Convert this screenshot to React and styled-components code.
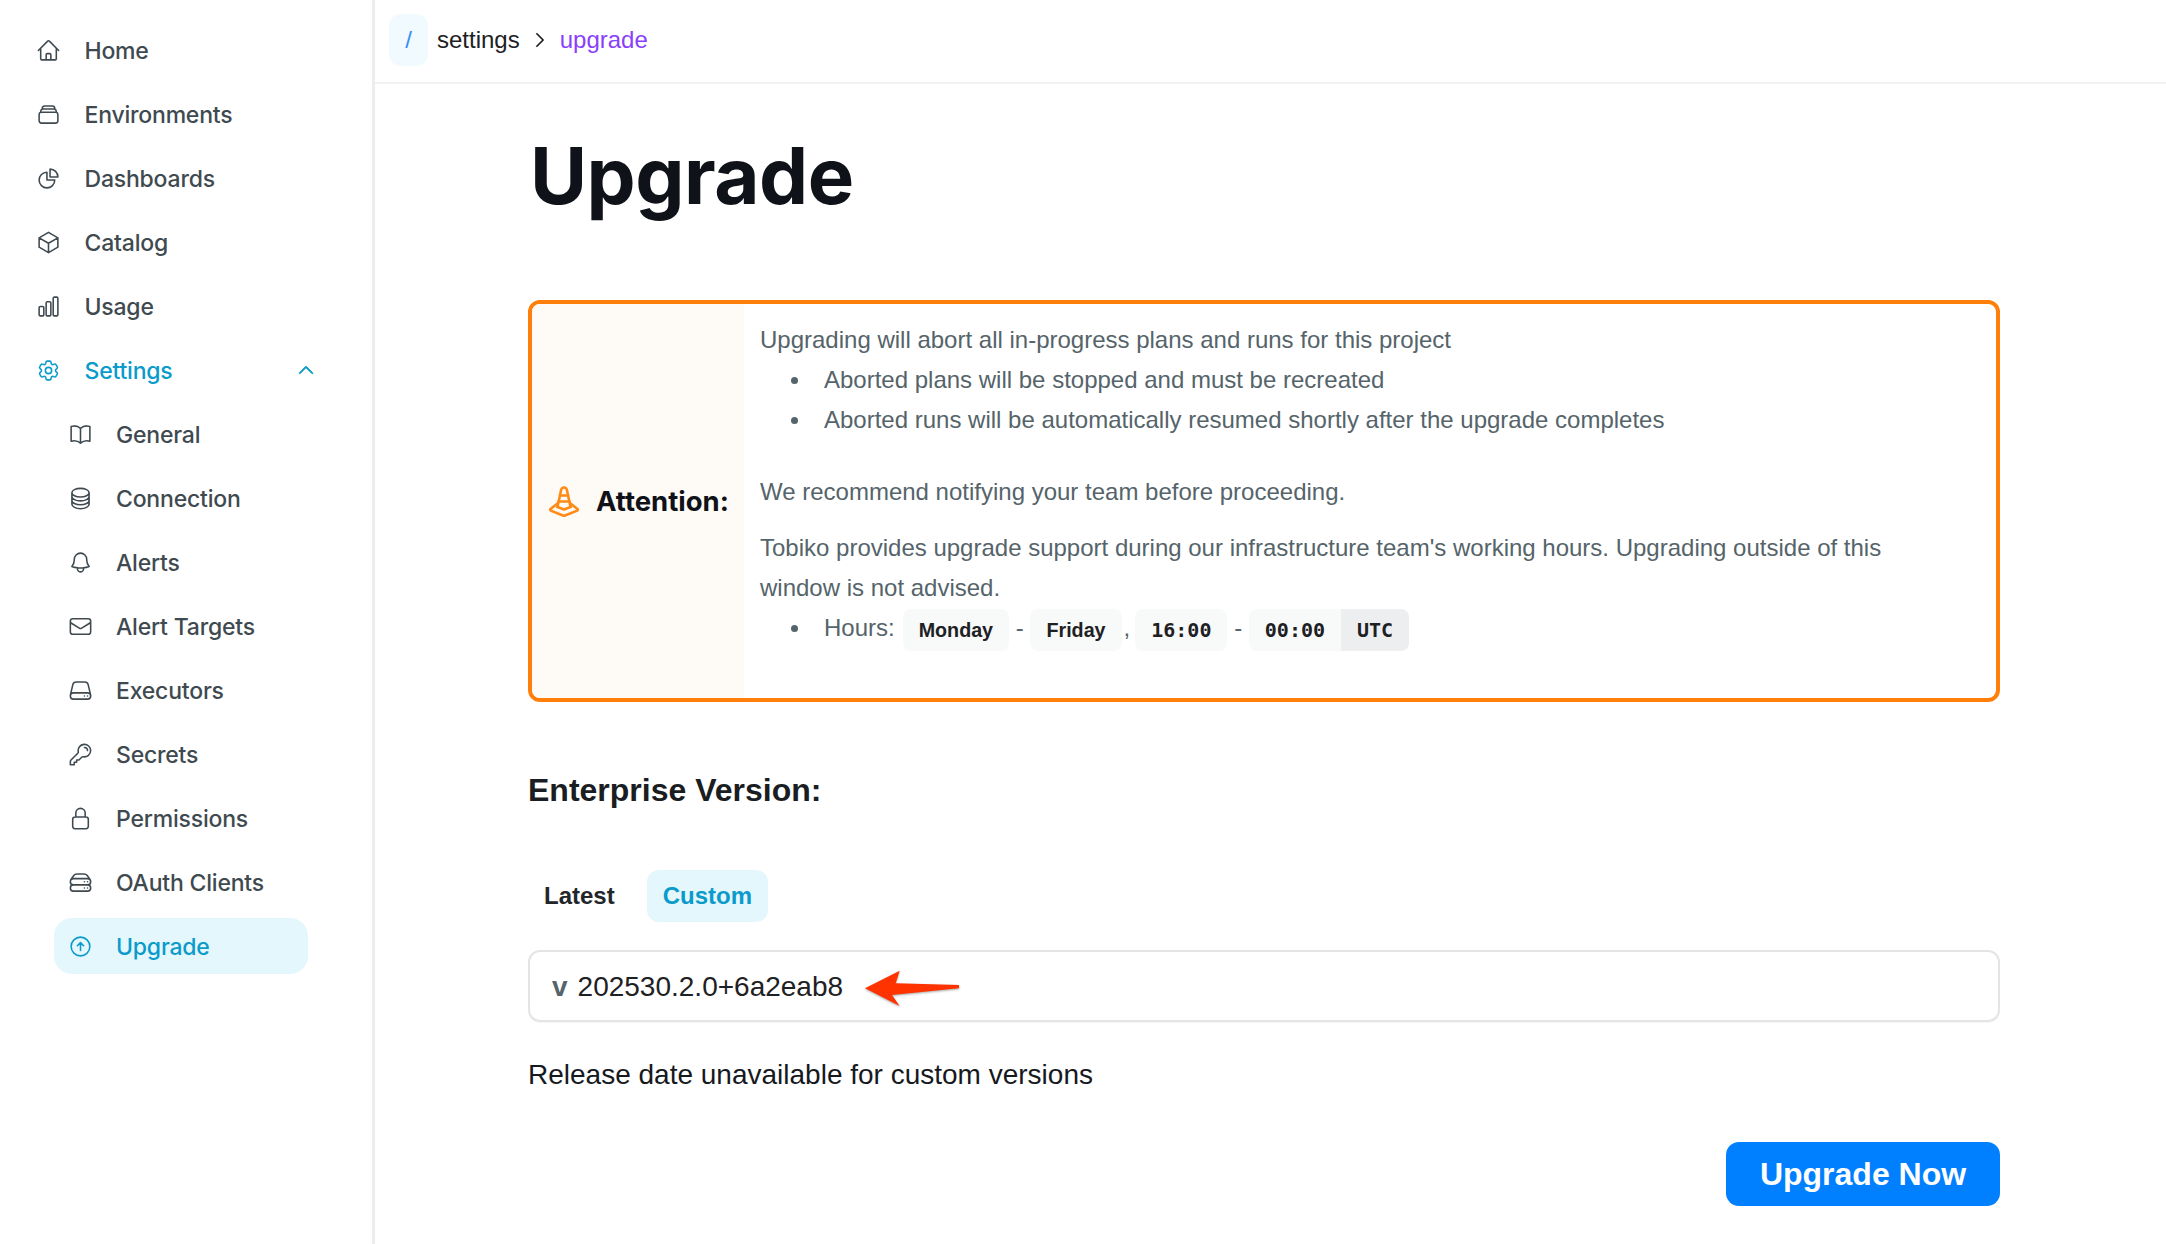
import React from 'react';
import styled, { createGlobalStyle } from 'styled-components';
import {
  HiOutlineHome, HiOutlineRectangleStack, HiOutlineChartPie, HiOutlineCube, HiOutlineChartBar,
  HiOutlineCog6Tooth, HiOutlineBookOpen, HiOutlineCircleStack, HiOutlineBell, HiOutlineEnvelope,
  HiOutlineServer, HiOutlineKey, HiOutlineLockClosed, HiOutlineServerStack, HiOutlineArrowUpCircle,
  HiChevronUp, HiChevronRight,
} from 'react-icons/hi2';

const Global = createGlobalStyle`
  html, body { margin: 0; padding: 0; background: #fff; }
  body { font-family: "Liberation Sans", Arial, sans-serif; }
  * { box-sizing: border-box; }
`;
const Page = styled.div`
  display: flex; width: 2166px; height: 1244px; overflow: hidden; background: #fff;
`;
const Side = styled.nav`
  width: 375px; flex: none; border-right: 3px solid #eceeee; padding: 18px 0 0 35.5px;
  display: flex; flex-direction: column;
  font-family: Inter, sans-serif; font-weight: 500; font-size: 23px; letter-spacing: -.2px; color: #3f4a50;
`;
const Row = styled.div`
  height: 64px; display: flex; align-items: center; gap: ${p => (p.$sub ? 23.5 : 24)}px; position: relative;
  margin-left: ${p => (p.$sub ? 32 : 0)}px;
  color: ${p => (p.$on ? '#0a9bcb' : '#3f4a50')};
  svg.i { width: 25px; height: 25px; flex: none; }
  &::before {
    content: ''; display: ${p => (p.$pill ? 'block' : 'none')}; position: absolute;
    left: -13.5px; width: 254px; top: 4px; bottom: 4px; background: #e4f7fd; border-radius: 18px;
  }
  > * { position: relative; }
  > span { padding-top: 2px; }
`;
const Chevron = styled(HiChevronUp)`
  position: absolute !important; left: 260px; width: 20px; height: 20px; stroke: currentColor; stroke-width: 1;
`;
const Main = styled.main`
  flex: 1; min-width: 0; display: flex; flex-direction: column;
`;
const Crumbs = styled.header`
  height: 84px; flex: none; border-bottom: 2px solid #f1f3f3; display: flex; align-items: center;
  padding: 0 0 2px 14px; font-size: 24px; color: #1e2124;
`;
const Slash = styled.span`
  width: 39px; height: 52px; border-radius: 12px; background: #f0faff; color: #3b8ef5;
  display: flex; align-items: center; justify-content: center; margin-right: 9px; font-size: 24px;
`;
const CrumbSep = styled(HiChevronRight)`
  width: 20px; height: 20px; margin: 0 10px 0 10px; stroke: currentColor; stroke-width: .5;
`;
const Current = styled.span`color: #8a3ffc;`;
const Content = styled.div`
  padding: 0 166px 0 153px; display: flex; flex-direction: column;
`;
const Title = styled.h1`
  margin: 46px 0 0; padding-left: 2px; font-family: Inter, sans-serif; font-weight: 700; font-size: 78px;
  line-height: 92px; color: #0f1218; letter-spacing: -.5px;
`;
const Alert = styled.section`
  margin-top: 78px; height: 402px; border: 4px solid #ff7f0a; border-radius: 12px; display: flex; overflow: hidden;
`;
const AlertSide = styled.div`
  width: 212px; flex: none; background: #fefaf6; display: flex; align-items: center; padding: 0 0 0 16px; gap: 16px;
`;
const AlertLabel = styled.span`
  font-family: Inter, sans-serif; font-weight: 700; font-size: 27.5px; color: #0f1218;
`;
const AlertBody = styled.div`
  padding: 16px 60px 0 16px; font-size: 24px; line-height: 40px; color: #55646a; flex: 1;
`;
const P = styled.p`margin: 0 0 ${p => p.$mb || 0}px;`;
const Ul = styled.ul`margin: 0 0 ${p => p.$mb || 0}px; padding-left: 64px; list-style: none;`;
const Li = styled.li`
  position: relative;
  &::before {
    content: ''; position: absolute; left: -33px; top: 17px; width: 7px; height: 7px; border-radius: 50%; background: #55646a;
  }
`;
const ChipRow = styled.div`display: flex; align-items: center; height: 40px;`;
const Hours = styled.span`margin-right: 8px;`;
const Sep = styled.span`margin: ${p => p.$comma ? '0 5px 0 2px' : '0 6.7px'}; line-height: 40px;`;
const Chip = styled.span`
  height: 42px; margin-top: 4px; padding: 0 16px;
  border-radius: ${p => p.$join === 'left' ? '8px 0 0 8px' : p.$join === 'right' ? '0 8px 8px 0' : '8px'};
  display: inline-flex; align-items: center; flex: none;
  background: ${p => p.$dark ? '#edeef0' : '#f8f9f9'}; color: #1e2124; font-weight: 700;
  font-size: ${p => p.$mono ? 20 : 19.7}px;
  font-family: ${p => p.$mono ? '"DejaVu Sans Mono", monospace' : '"Liberation Sans", sans-serif'};
`;
const H2 = styled.h2`
  margin: 68px 0 0; font-size: 32px; line-height: 40px; font-weight: 700; color: #1a1d21;
`;
const Tabs = styled.div`display: flex; margin-top: 60px; gap: 0;`;
const Tab = styled.button`
  height: 52px; border: 0; border-radius: 12px; padding: 0 16px; margin: 0; font: 700 24px "Liberation Sans", sans-serif;
  background: ${p => p.$on ? '#e4f7fd' : 'transparent'}; color: ${p => p.$on ? '#0a9bcb' : '#22262a'};
  margin-left: ${p => p.$on ? 16 : 0}px;
`;
const Field = styled.div`
  margin-top: 28px; height: 72px; border: 2px solid #e3e5e5; border-radius: 12px; display: flex; align-items: center;
  padding: 2px 0 0 22px; font-size: 28px; color: #1e2124; box-shadow: 0 1px 1px rgba(0,0,0,.04);
`;
const V = styled.span`font-weight: 700; color: #55646a; margin-right: 10px;`;
const Arrow = styled.svg`width: 100px; height: 44px; margin-left: 20px; flex: none; overflow: visible;`;
const Note = styled.p`margin: 36px 0 0; font-size: 28px; line-height: 34px; color: #16191d;`;
const Actions = styled.div`display: flex; justify-content: flex-end; margin-top: 50px;`;
const Primary = styled.button`
  width: 274px; height: 64px; border: 0; border-radius: 13px; background: #0080ff; color: #fff;
  font: 700 32px "Liberation Sans", sans-serif;
`;

const top = [
  ['Home', HiOutlineHome], ['Environments', HiOutlineRectangleStack], ['Dashboards', HiOutlineChartPie],
  ['Catalog', HiOutlineCube], ['Usage', HiOutlineChartBar],
];
const sub = [
  ['General', HiOutlineBookOpen], ['Connection', HiOutlineCircleStack], ['Alerts', HiOutlineBell],
  ['Alert Targets', HiOutlineEnvelope], ['Executors', HiOutlineServer], ['Secrets', HiOutlineKey],
  ['Permissions', HiOutlineLockClosed], ['OAuth Clients', HiOutlineServerStack],
];

const Cone = () => (
  <svg width="32" height="32" viewBox="0 0 32 32" fill="none" stroke="#ff8a14" strokeWidth="2.6" strokeLinejoin="round" strokeLinecap="round">
    <path d="M9.5 22 13 5.5a3 3 0 0 1 6 0L22.5 22" />
    <path d="M12 10.5h8M10.5 16.5h11" />
    <path d="M9.5 18.5 2.5 24a1 1 0 0 0 .3 1.6L15 30.5a3 3 0 0 0 2 0L29.2 25.6a1 1 0 0 0 .3-1.6L22.5 18.5" />
    <path d="M9.5 22 16 24.5 22.5 22" />
  </svg>
);

export default function App() {
  return (
    <Page>
      <Global />
      <Side>
        {top.map(([t, I]) => <Row key={t}><I className="i" /><span>{t}</span></Row>)}
        <Row $on><HiOutlineCog6Tooth className="i" /><span>Settings</span><Chevron /></Row>
        {sub.map(([t, I]) => <Row key={t} $sub><I className="i" /><span>{t}</span></Row>)}
        <Row $sub $on $pill><HiOutlineArrowUpCircle className="i" /><span>Upgrade</span></Row>
      </Side>
      <Main>
        <Crumbs><Slash>/</Slash><span>settings</span><CrumbSep /><Current>upgrade</Current></Crumbs>
        <Content>
          <Title>Upgrade</Title>
          <Alert>
            <AlertSide><Cone /><AlertLabel>Attention:</AlertLabel></AlertSide>
            <AlertBody>
              <P>Upgrading will abort all in-progress plans and runs for this project</P>
              <Ul $mb={32}>
                <Li>Aborted plans will be stopped and must be recreated</Li>
                <Li>Aborted runs will be automatically resumed shortly after the upgrade completes</Li>
              </Ul>
              <P $mb={16}>We recommend notifying your team before proceeding.</P>
              <P>Tobiko provides upgrade support during our infrastructure team's working hours. Upgrading outside of this window is not advised.</P>
              <Ul>
                <Li>
                  <ChipRow>
                    <Hours>Hours:</Hours><Chip>Monday</Chip><Sep>-</Sep><Chip>Friday</Chip><Sep $comma>,</Sep>
                    <Chip $mono>16:00</Chip><Sep>-</Sep><Chip $mono $join="left">00:00</Chip><Chip $mono $dark $join="right">UTC</Chip>
                  </ChipRow>
                </Li>
              </Ul>
            </AlertBody>
          </Alert>
          <H2>Enterprise Version:</H2>
          <Tabs><Tab>Latest</Tab><Tab $on>Custom</Tab></Tabs>
          <Field>
            <V>v</V><span>202530.2.0+6a2eab8</span>
            <Arrow viewBox="0 0 100 44">
              <path d="M2 23.3 36.7 5.7 32.7 18.3 96 20 96 23.3 29 30 36.7 41Z" fill="#ff3300" style={{ filter: 'drop-shadow(0 1px 1px rgba(0,0,0,.35))' }} />
            </Arrow>
          </Field>
          <Note>Release date unavailable for custom versions</Note>
          <Actions><Primary>Upgrade Now</Primary></Actions>
        </Content>
      </Main>
    </Page>
  );
}
